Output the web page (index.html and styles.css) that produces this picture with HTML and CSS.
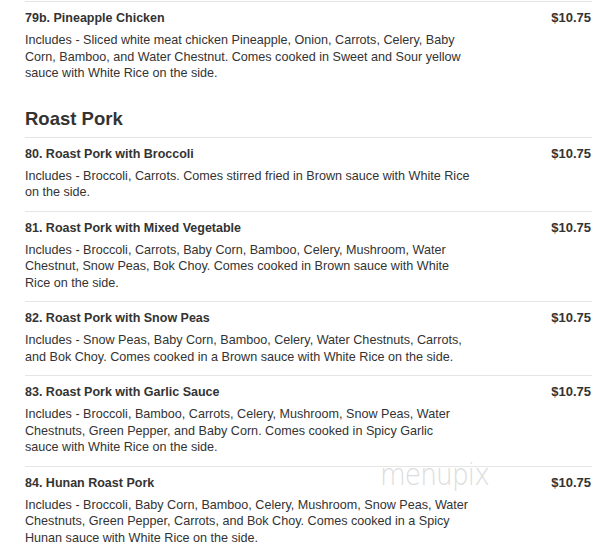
FILE: index.html
```html
<!DOCTYPE html>
<html>
<head>
<meta charset="utf-8">
<link rel="stylesheet" href="styles.css">
</head>
<body>
<div class="menu">
  <div class="item">
    <div class="item-body">
      <div class="title">79b. Pineapple Chicken</div>
      <div class="desc">Includes - Sliced white meat chicken Pineapple, Onion, Carrots, Celery, Baby Corn, Bamboo, and Water Chestnut. Comes cooked in Sweet and Sour yellow sauce with White Rice on the side.</div>
    </div>
    <div class="price">$10.75</div>
  </div>

  <h2 class="section-heading">Roast Pork</h2>

  <div class="item">
    <div class="item-body">
      <div class="title">80. Roast Pork with Broccoli</div>
      <div class="desc">Includes - Broccoli, Carrots. Comes stirred fried in Brown sauce with White Rice on the side.</div>
    </div>
    <div class="price">$10.75</div>
  </div>
  <div class="item">
    <div class="item-body">
      <div class="title">81. Roast Pork with Mixed Vegetable</div>
      <div class="desc">Includes - Broccoli, Carrots, Baby Corn, Bamboo, Celery, Mushroom, Water Chestnut, Snow Peas, Bok Choy. Comes cooked in Brown sauce with White Rice on the side.</div>
    </div>
    <div class="price">$10.75</div>
  </div>
  <div class="item">
    <div class="item-body">
      <div class="title">82. Roast Pork with Snow Peas</div>
      <div class="desc">Includes - Snow Peas, Baby Corn, Bamboo, Celery, Water Chestnuts, Carrots, and Bok Choy. Comes cooked in a Brown sauce with White Rice on the side.</div>
    </div>
    <div class="price">$10.75</div>
  </div>
  <div class="item">
    <div class="item-body">
      <div class="title">83. Roast Pork with Garlic Sauce</div>
      <div class="desc">Includes - Broccoli, Bamboo, Carrots, Celery, Mushroom, Snow Peas, Water Chestnuts, Green Pepper, and Baby Corn. Comes cooked in Spicy Garlic<br>sauce with White Rice on the side.</div>
    </div>
    <div class="price">$10.75</div>
  </div>
  <div class="item item-last">
    <div class="item-body">
      <div class="title">84. Hunan Roast Pork</div>
      <div class="desc">Includes - Broccoli, Baby Corn, Bamboo, Celery, Mushroom, Snow Peas, Water Chestnuts, Green Pepper, Carrots, and Bok Choy. Comes cooked in a Spicy Hunan sauce with White Rice on the side.</div>
    </div>
    <div class="price">$10.75</div>
  </div>
</div>
<div class="watermark">menupix</div>
</body>
</html>
```
FILE: styles.css
```css
html, body {
  margin: 0;
  padding: 0;
  background: #fff;
}
body {
  font-family: "Liberation Sans", Arial, sans-serif;
  color: #333;
  position: relative;
  height: 555px;
  overflow: hidden;
}
.menu {
  margin: 0 20px 0 25px;
  padding-top: 1px;
}
.item {
  display: flex;
  justify-content: space-between;
  align-items: flex-start;
  border-top: 1px solid #e5e5e5;
  padding: 8px 1px 10px 0;
}
.item-last {
  border-bottom: 1px solid #e5e5e5;
}
.item-body {
  width: 447px;
}
.title {
  font-weight: bold;
  font-size: 12.5px;
  line-height: 16px;
  color: #333;
}
.desc {
  margin-top: 6px;
  font-size: 12.6px;
  line-height: 16.5px;
  color: #333;
}
.price {
  font-weight: bold;
  font-size: 13px;
  line-height: 16px;
  color: #333;
}
.section-heading {
  margin: 0;
  padding: 16px 0 7px;
  font-size: 18.5px;
  line-height: 22px;
  font-weight: bold;
  color: #333;
}
.watermark {
  position: absolute;
  left: 380px;
  top: 457px;
  font-family: "DejaVu Sans", sans-serif;
  font-weight: 200;
  font-stretch: condensed;
  font-size: 30px;
  letter-spacing: -1px;
  color: #dcdcdc;
  transform: scaleX(0.88);
  transform-origin: left top;
}
```
